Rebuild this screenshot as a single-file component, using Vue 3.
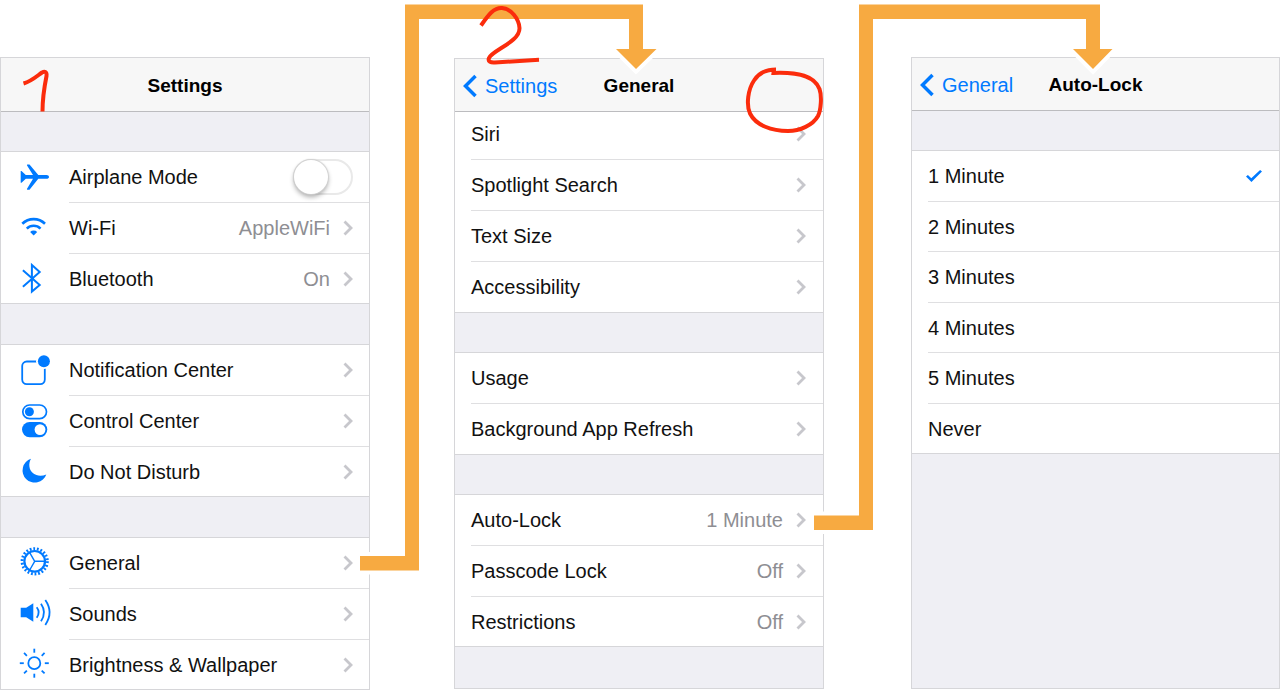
<script setup>
import { ref } from 'vue'

const airplane = ref(false)
const lockTime = ref('1 Minute')

const settings = [
  [
    { icon: 'airplane', label: 'Airplane Mode', toggle: true },
    { icon: 'wifi', label: 'Wi-Fi', value: 'AppleWiFi' },
    { icon: 'bluetooth', label: 'Bluetooth', value: 'On' }
  ],
  [
    { icon: 'notification', label: 'Notification Center' },
    { icon: 'control', label: 'Control Center' },
    { icon: 'moon', label: 'Do Not Disturb' }
  ],
  [
    { icon: 'gear', label: 'General' },
    { icon: 'sound', label: 'Sounds' },
    { icon: 'sun', label: 'Brightness & Wallpaper' }
  ]
]

const general = [
  [
    { label: 'Siri' },
    { label: 'Spotlight Search' },
    { label: 'Text Size' },
    { label: 'Accessibility' }
  ],
  [{ label: 'Usage' }, { label: 'Background App Refresh' }],
  [
    { label: 'Auto-Lock', value: '1 Minute' },
    { label: 'Passcode Lock', value: 'Off' },
    { label: 'Restrictions', value: 'Off' }
  ]
]

const times = ['1 Minute', '2 Minutes', '3 Minutes', '4 Minutes', '5 Minutes', 'Never']
const rays = [0, 45, 90, 135, 180, 225, 270, 315]
</script>

<template>
  <main class="board">
    <section class="panel panel-settings">
      <header class="bar"><h1>Settings</h1></header>
      <ul v-for="(group, g) in settings" :key="g" class="group">
        <li v-for="item in group" :key="item.label" class="row">
          <component :is="item.toggle ? 'label' : 'button'" class="line">
            <span class="icon">
              <svg viewBox="0 0 34 34" aria-hidden="true">
                <path v-if="item.icon === 'airplane'" class="solid" d="M2.7 10h.8l4.300 4H15L8.900 4.300 9.200 3.500h2.300L20.300 14h8.200c1.500 0 2.500.8 2.500 1.900s-1 1.900-2.500 1.900h-8.200L11.500 28.800H9.200l-.3-.9L15 17.800H7.800l-4.300 4h-.8z" />
                <g v-else-if="item.icon === 'wifi'">
                  <path class="stroke" stroke-width="2.6" d="M4.300 11.800A16.200 16.200 0 0 1 27 11.800M8.800 16.600a9.700 9.700 0 0 1 13.700 0" />
                  <path class="solid" d="M12.100 20a5 5 0 0 1 7.100 0l-3.500 3.600z" />
                </g>
                <path v-else-if="item.icon === 'bluetooth'" class="stroke" stroke-width="2" d="M4.900 8.200 21.700 23 13.900 29.600V3l7.800 7L4.900 24.800" />
                <g v-else-if="item.icon === 'notification'">
                  <rect class="stroke" stroke-width="1.8" x="4.200" y="7.500" width="22.600" height="22.600" rx="4.600" />
                  <circle class="paper" cx="25.900" cy="7.200" r="7.900" />
                  <circle class="solid" cx="25.900" cy="7.200" r="6" />
                </g>
                <g v-else-if="item.icon === 'control'">
                  <rect class="stroke" stroke-width="1.7" x="4.800" y="0" width="23.700" height="13.600" rx="6.800" />
                  <circle class="solid" cx="11.400" cy="6.800" r="4.500" />
                  <rect class="solid" x="4" y="17" width="25.300" height="15.200" rx="7.600" />
                  <circle class="paper" cx="22" cy="24.600" r="5.400" />
                </g>
                <path v-else-if="item.icon === 'moon'" class="solid" d="M13 3.800A12.200 12.200 0 1 0 28.300 19.400C21.500 22.600 12.500 20.100 11.400 11.600c-.4-2.800.3-5.500 1.600-7.800z" />
                <g v-else-if="item.icon === 'gear'" class="stroke">
                  <circle stroke-width="2.200" cx="16.700" cy="14.300" r="10.300" />
                  <circle stroke-width="3" stroke-dasharray="1.800 1.800" cx="16.700" cy="14.300" r="12.600" />
                  <path stroke-width="1.400" d="M16.700 14.300h10M16.700 14.300l-5-8.700M16.700 14.300l-5 8.700" />
                </g>
                <g v-else-if="item.icon === 'sound'">
                  <path class="solid" d="M2.700 9.700h5.500l7.100-4.400v18.400l-7.100-4.400H2.700z" />
                  <path class="stroke" stroke-width="1.800" d="M18.700 9.300q4 5.200 0 10.400M23 5.800q6 8.700 0 17.400M27.300 2.100q8.600 12.400 0 24.800" />
                </g>
                <g v-else class="stroke" stroke-width="1.800">
                  <circle cx="16.300" cy="15.200" r="6" />
                  <path v-for="angle in rays" :key="angle" d="M26.800 15.200h4" :transform="`rotate(${angle} 16.300 15.200)`" />
                </g>
              </svg>
            </span>
            <span class="body">
              <span class="name">{{ item.label }}</span>
              <input v-if="item.toggle" v-model="airplane" class="switch" type="checkbox" />
              <template v-else>
                <span v-if="item.value" class="value">{{ item.value }}</span>
                <svg class="chevron" viewBox="0 0 10 16" aria-hidden="true"><path d="M1.500 1.500 8 8l-6.500 6.500" /></svg>
              </template>
            </span>
          </component>
        </li>
      </ul>
    </section>

    <section class="panel panel-general">
      <header class="bar">
        <a class="back" href="#settings">
          <svg viewBox="0 0 14 24" aria-hidden="true"><path d="M12.500 2 2.500 12l10 10" /></svg>Settings
        </a>
        <h1>General</h1>
      </header>
      <div class="scroll">
        <ul v-for="(group, g) in general" :key="g" class="group">
          <li v-for="item in group" :key="item.label" class="row">
            <button class="line">
              <span class="body">
                <span class="name">{{ item.label }}</span>
                <span v-if="item.value" class="value">{{ item.value }}</span>
                <svg class="chevron" viewBox="0 0 10 16" aria-hidden="true"><path d="M1.500 1.500 8 8l-6.500 6.500" /></svg>
              </span>
            </button>
          </li>
        </ul>
      </div>
    </section>

    <section class="panel panel-lock">
      <header class="bar">
        <a class="back" href="#general">
          <svg viewBox="0 0 14 24" aria-hidden="true"><path d="M12.500 2 2.500 12l10 10" /></svg>General
        </a>
        <h1>Auto-Lock</h1>
      </header>
      <ul class="group">
        <li v-for="time in times" :key="time" class="row">
          <label class="line">
            <span class="body">
              <span class="name">{{ time }}</span>
              <input v-model="lockTime" class="tick" type="radio" name="lock" :value="time" />
            </span>
          </label>
        </li>
      </ul>
    </section>

    <svg class="overlay" viewBox="0 0 1280 690" preserveAspectRatio="none" aria-hidden="true">
      <g class="arrow">
        <path d="M360 556h45V4.500h238V49h13.500L636 69l-20-20h13V19H419v551.500h-59z" />
        <path d="M814 515.500h45V4.500h241V49h12.500L1093 69l-20-20h13V19H873v511h-59z" />
      </g>
      <g class="pen">
        <path d="M23.500 83.500C32 81 37 76 42 72.500c3-1.500 5-.5 4.500 3.500-2 10-4 21-4 35.500" />
        <path d="M481 25.500C489 14 494 7.500 502 8c9 .5 17 11 17.500 20 .5 14-27 22-30.500 30-1.500 4 2 4.800 6 4.500l44-2.800" />
        <path d="M776 69.500c-9 0-17 3-22 11-6 9-8 24-4 33 6 12 22 17.500 38 17.500 12 0 25-6 30-15 3-6 4-20 1.500-27-5-13-21-17-46-16l.5-4" />
      </g>
    </svg>
  </main>
</template>

<style>
body {
  margin: 0;
  background: #fff;
}
</style>

<style scoped>
.board {
  position: relative;
  display: grid;
  grid-template-columns: 370fr 84px 370fr 87px 369fr;
  min-height: 690px;
  color: #111;
  font: 20px/24px "Liberation Sans", Arial, Helvetica, sans-serif;
}

.panel {
  box-sizing: border-box;
  min-width: 0;
  margin-top: 57px;
  background: #efeff4;
  border: 1px solid #d6d6d9;
}

.panel-settings {
  grid-column: 1;
  border-bottom: 0;
}

.panel-general {
  grid-column: 3;
  margin-top: 58px;
  margin-bottom: 1px;
}

.panel-lock {
  grid-column: 5;
  margin-bottom: 1px;
}

.bar {
  position: relative;
  box-sizing: border-box;
  display: flex;
  align-items: center;
  justify-content: center;
  height: 53px;
  padding-top: 2px;
  background: #f7f7f7;
  border-bottom: 1px solid #bcbcbf;
}

.panel-settings .bar {
  height: 54px;
}

h1 {
  margin: 0;
  color: #000;
  font-size: 19px;
  font-weight: 700;
}

.back {
  position: absolute;
  left: 8px;
  display: flex;
  align-items: center;
  gap: 8px;
  color: #007aff;
  text-decoration: none;
}

.back svg {
  width: 14px;
  height: 24px;
  fill: none;
  stroke: currentColor;
  stroke-width: 3.5;
}

.scroll {
  overflow: hidden;
}

.group {
  margin: 40px 0 0;
  padding: 0;
  list-style: none;
  background: #fff;
  box-shadow: 0 -1px #d6d6d9;
}

.panel-settings .group + .group {
  margin-top: 41px;
}

.scroll .group:first-child {
  margin-top: -3px;
}

.row {
  box-sizing: border-box;
  height: 51px;
}

.row:nth-child(3):last-child,
.panel-lock .row:nth-child(even) {
  height: 50px;
}

.row:last-child {
  border-bottom: 1px solid #d6d6d9;
}

.line {
  box-sizing: border-box;
  display: flex;
  width: 100%;
  height: 100%;
  padding: 0 0 0 16px;
  color: inherit;
  font: inherit;
  text-align: left;
  background: none;
  border: 0;
}

.panel-settings .line {
  padding-left: 0;
}

.icon {
  display: flex;
  flex: none;
  align-items: center;
  width: 51px;
  padding-left: 17px;
}

.icon svg {
  width: 34px;
  height: 34px;
  overflow: visible;
}

.solid {
  fill: #007aff;
}

.paper {
  fill: #fff;
}

.stroke {
  fill: none;
  stroke: #007aff;
}

.body {
  box-sizing: border-box;
  display: flex;
  flex: 1;
  align-items: center;
  min-width: 0;
  padding-right: 17px;
  border-bottom: 1px solid #dfdfe1;
}

.panel-settings .body {
  padding-right: 16px;
}

.row:last-child .body {
  border-bottom: 0;
}

.name {
  flex: 1;
  white-space: nowrap;
}

.value {
  margin-right: 13px;
  color: #8e8e93;
}

.chevron {
  width: 10px;
  height: 16px;
  fill: none;
  stroke: #c7c7cc;
  stroke-width: 2.8;
}

.switch {
  position: relative;
  box-sizing: border-box;
  width: 60px;
  height: 36px;
  margin: 0;
  appearance: none;
  background: #fff;
  border: 2px solid #e9e9e9;
  border-radius: 18px;
}

.switch::before {
  position: absolute;
  top: -1px;
  left: -1px;
  width: 34px;
  height: 34px;
  content: "";
  background: #fff;
  border-radius: 50%;
  box-shadow: 0 0 1px 1px #d0d0d0, 0 3px 5px #0005;
}

.switch:checked {
  background: #4cd964;
}

.switch:checked::before {
  left: 23px;
}

.tick {
  width: 16px;
  height: 12px;
  margin: 0;
  appearance: none;
}

.tick:checked {
  background: #007aff;
  clip-path: polygon(0 54%, 12% 42%, 33% 68%, 88% 0, 100% 12%, 34% 100%);
}

.overlay {
  position: absolute;
  top: 0;
  left: 0;
  width: 100%;
  height: 690px;
  pointer-events: none;
}

.arrow {
  fill: #f7aa41;
  stroke: #fff;
  stroke-width: 8;
  paint-order: stroke;
}

.pen {
  fill: none;
  stroke: #fb2c0c;
  stroke-width: 4;
}
</style>
